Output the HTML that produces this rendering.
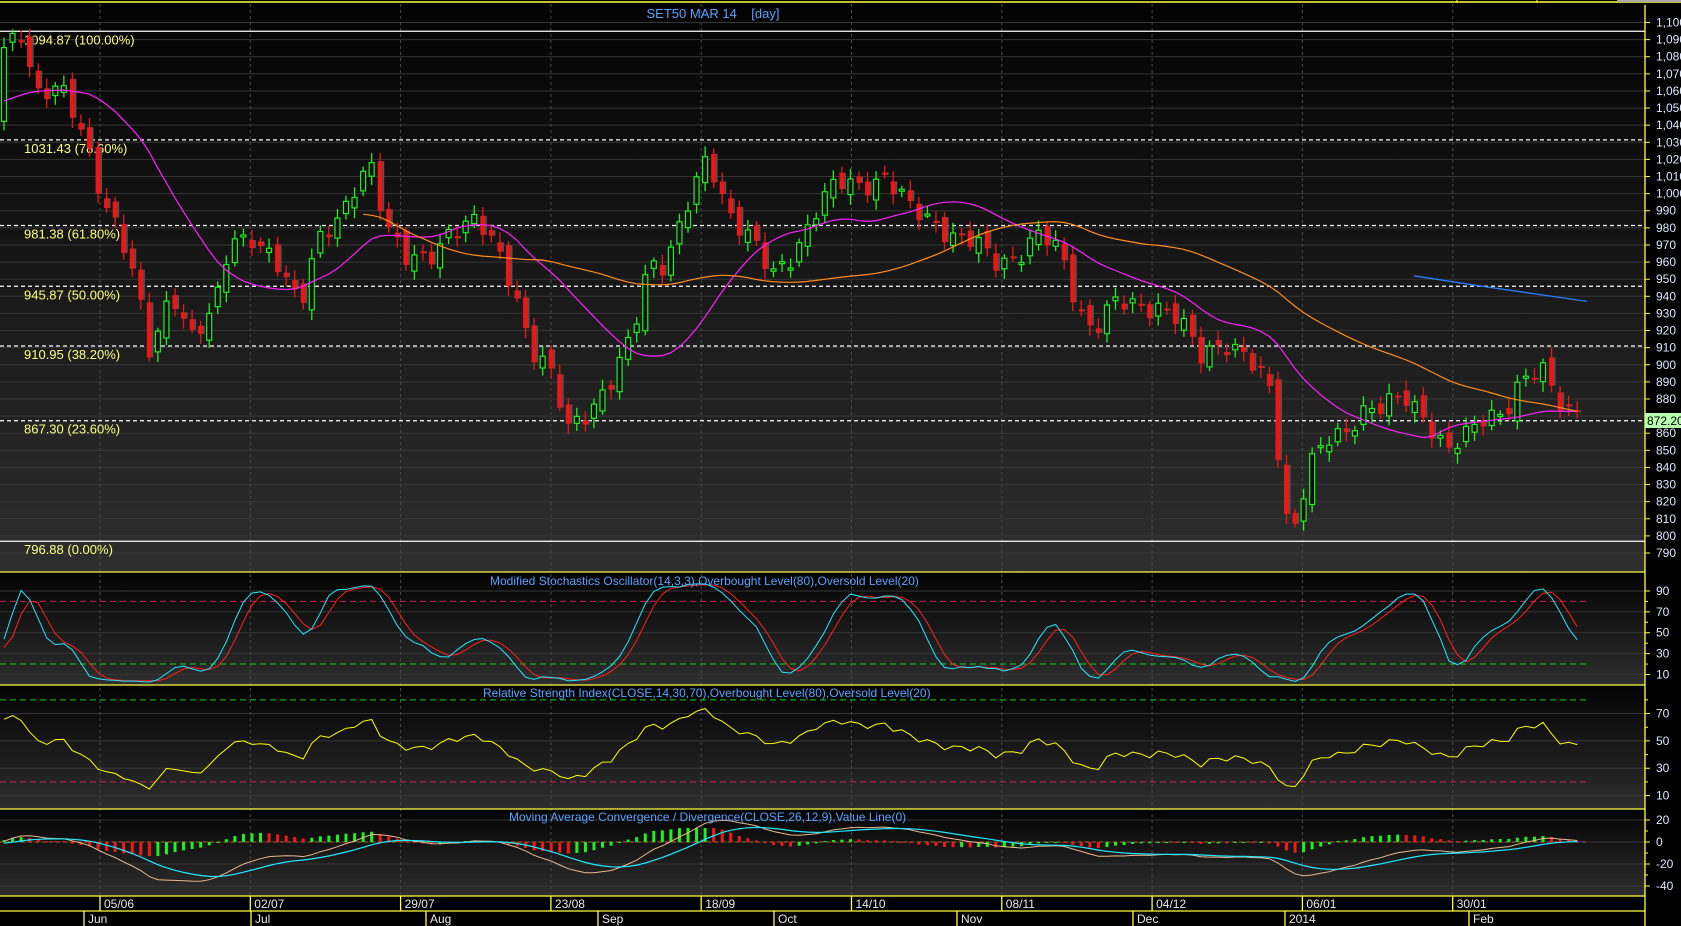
<!DOCTYPE html>
<html><head><meta charset="utf-8">
<style>
html,body{margin:0;padding:0;background:#000;width:1681px;height:926px;overflow:hidden}
svg{display:block}
text{font-family:"Liberation Sans",Arial,sans-serif}
</style></head><body>
<svg id="s" width="1681" height="926" xmlns="http://www.w3.org/2000/svg">
<defs>
<linearGradient id="g" x1="0" y1="0" x2="0" y2="1"><stop offset="0" stop-color="#030303"/><stop offset="1" stop-color="#2e2e2e"/></linearGradient>
</defs>
<rect x="0" y="0" width="1681" height="926" fill="#000"/>
<rect x="0" y="4" width="1645" height="568" fill="url(#g)"/>
<rect x="0" y="572" width="1645" height="113" fill="url(#g)"/>
<rect x="0" y="685" width="1645" height="124" fill="url(#g)"/>
<rect x="0" y="809" width="1645" height="87" fill="url(#g)"/>
<g id="c"></g>
</svg>
<script>
var S='';
function L(x1,y1,x2,y2,c,w,d){S+='<line x1="'+x1+'" y1="'+y1+'" x2="'+x2+'" y2="'+y2+'" stroke="'+c+'" stroke-width="'+(w||1)+'"'+(d?' stroke-dasharray="'+d+'"':'')+'/>';}
function T(x,y,t,c,sz,anc){S+='<text x="'+x+'" y="'+y+'" fill="'+c+'" font-size="'+(sz||12)+'"'+(anc?' text-anchor="'+anc+'"':'')+'>'+t+'</text>';}
function P(pts,c,w){if(!pts.length)return;S+='<polyline fill="none" stroke="'+c+'" stroke-width="'+(w||1)+'" points="'+pts.map(p=>p[0].toFixed(1)+','+p[1].toFixed(1)).join(' ')+'"/>';}
var AX=1645;
function py(v){return 22.5+(1100-v)*1.7113;}
function sy(v){return 674.5-(v-10)*1.044;}
function ry(v){return 795.6-(v-10)*1.368;}
function my(v){return 842-v*1.1;}
for(var v=790;v<=1100;v+=10){L(0,py(v),AX,py(v),'#363636');}
[90,70,50,30,10].forEach(v=>L(0,sy(v),AX,sy(v),'#363636'));
[70,50,30,10].forEach(v=>L(0,ry(v),AX,ry(v),'#363636'));
[20,0,-20,-40].forEach(v=>L(0,my(v),AX,my(v),'#363636'));
var dl=['05/06','02/07','29/07','23/08','18/09','14/10','08/11','04/12','06/01','30/01'];
for(var k=0;k<10;k++){var x=100+150.3*k;L(x,4,x,896,'#4a4a4a',1,'3,3');}
var fib=[[1094.87,'1094.87 (100.00%)',0],[1031.43,'1031.43 (78.60%)',1],[981.38,'981.38 (61.80%)',1],[945.87,'945.87 (50.00%)',1],[910.95,'910.95 (38.20%)',1],[867.30,'867.30 (23.60%)',1],[796.88,'796.88 (0.00%)',0]];
fib.forEach(f=>{var y=py(f[0]);L(0,y,AX,y,'#ffffff',1.2,f[2]?'4,3':null);T(24,y+13,f[1],'#ffff80',13);});
var kp=[[0,1080],[20,1094],[35,1060],[55,1062],[80,1030],[95,1000],[110,980],[125,950],[140,905],[160,945],[180,915],[200,930],[215,975],[235,975],[260,955],[280,935],[295,975],[320,985],[345,1020],[360,985],[380,960],[400,960],[420,980],[440,985],[455,975],[480,945],[495,910],[510,900],[530,862],[550,875],[570,890],[590,915],[605,960],[620,960],[640,990],[660,1020],[680,990],[700,975],[720,950],[740,965],[760,990],[780,1005],[800,1005],[825,1010],[850,990],[870,985],[890,975],[910,970],[930,960],[950,965],[970,975],[990,965],[1005,935],[1020,920],[1040,935],[1060,935],[1080,935],[1100,925],[1120,905],[1140,915],[1160,905],[1185,885],[1200,812],[1210,808],[1220,840],[1240,855],[1255,860],[1270,875],[1290,875],[1310,880],[1330,870],[1350,850],[1365,855],[1385,870],[1405,875],[1420,890],[1440,895],[1460,875],[1478,872]];
kp=kp.map(p=>[p[0]*1.072,p[1]]);
function base(x){for(var j=1;j<kp.length;j++){if(x<=kp[j][0]){var a=kp[j-1],b=kp[j];return a[1]+(b[1]-a[1])*(x-a[0])/(b[0]-a[0]);}}return kp[kp.length-1][1];}
var N=185,X0=4,DX=8.55,PRE=40;
var C=[],O=[],H=[],Lo=[];
for(var i=-PRE;i<N;i++){var c=i<0?1050+Math.sin(i)*8-i*0.3:base(X0+i*DX)+5*Math.sin(i*2.1)+3*Math.sin(i*0.77+2);C.push(c);}
for(var i=0;i<C.length;i++){var o=i?C[i-1]+4*Math.sin(i*3.7):C[i];O.push(o);H.push(Math.max(o,C[i])+2+4*Math.abs(Math.sin(i*1.3)));Lo.push(Math.min(o,C[i])-2-4*Math.abs(Math.cos(i*1.9)));}
C[C.length-1]=872.2;
function X(i){return X0+(i-PRE)*DX;}
for(var i=PRE;i<C.length;i++){var x=X(i),o=O[i],c=C[i],up=c>=o;
 var col=up?'#22ee22':'#e81818';
 L(x,py(H[i]),x,py(Lo[i]),col,1.3);
 var t=py(Math.max(o,c)),b=py(Math.min(o,c));if(b-t<2)b=t+2;
 if(up){S+='<rect x="'+(x-2.5)+'" y="'+t+'" width="5" height="'+(b-t)+'" fill="#111" stroke="'+col+'" stroke-width="1.2"/>';}
 else{S+='<rect x="'+(x-2.5)+'" y="'+t+'" width="5" height="'+(b-t)+'" fill="'+col+'"/><rect x="'+(x+2.5)+'" y="'+t+'" width="1.5" height="'+(b-t)+'" fill="#555"/>';}
}
function sma(n){var r=[];for(var i=0;i<C.length;i++){if(i<n-1){r.push(null);continue;}var s=0;for(var j=i-n+1;j<=i;j++)s+=C[j];r.push(s/n);}return r;}
var m1=sma(18),pts=[];for(var i=PRE;i<C.length;i++)pts.push([X(i),py(m1[i])]);P(pts,'#ff20ff',1.2);
var m2=[];for(var i=0;i<C.length;i++){if(i-PRE<42){m2.push(null);continue;}var t2=0;for(var j=i-44;j<=i;j++)t2+=C[j];m2.push(t2/45);}
pts=[];for(var i=PRE+42;i<C.length;i++)pts.push([X(i),py(m2[i])]);P(pts,'#ff8c1a',1.2);
P([[1414,py(952)],[1480,py(946)],[1540,py(941)],[1587,py(937)]],'#2a7fff',1.3);
var Kr=[];for(var i=0;i<C.length;i++){var hh=-1e9,ll=1e9;for(var j=Math.max(0,i-13);j<=i;j++){hh=Math.max(hh,H[j]);ll=Math.min(ll,Lo[j]);}Kr.push(100*(C[i]-ll)/(hh-ll));}
function sm(a,n){var r=[];for(var i=0;i<a.length;i++){var s=0,c=0;for(var j=Math.max(0,i-n+1);j<=i;j++){s+=a[j];c++;}r.push(s/c);}return r;}
var K=sm(Kr,3);var D=sm(K,3);
L(0,sy(80),1587,sy(80),'#d0205a',1,'6,4');L(0,sy(20),1587,sy(20),'#10d010',1,'6,4');
pts=[];for(var i=PRE;i<C.length;i++)pts.push([X(i),sy(Math.max(4,Math.min(96,D[i])))]);P(pts,'#ff2020',1);
pts=[];for(var i=PRE;i<C.length;i++)pts.push([X(i),sy(Math.max(2,Math.min(98,K[i])))]);P(pts,'#22e8ff',1);
var ag=0,al=0,R=[];for(var i=1;i<C.length;i++){var d=C[i]-C[i-1],g=d>0?d:0,l=d<0?-d:0;if(i<=14){ag+=g/14;al+=l/14;}else{ag=(ag*13+g)/14;al=(al*13+l)/14;}R[i]=100-100/(1+ag/(al||1e-6));}
L(0,ry(80),1587,ry(80),'#10d010',1,'6,4');L(0,ry(20),1587,ry(20),'#d0205a',1,'6,4');
pts=[];for(var i=PRE;i<C.length;i++)pts.push([X(i),ry(R[i])]);P(pts,'#ffff00',1);
function ema(a,n){var k=2/(n+1),r=[a[0]];for(var i=1;i<a.length;i++)r.push(a[i]*k+r[i-1]*(1-k));return r;}
var e12=ema(C,12),e26=ema(C,26),M=C.map((c,i)=>e12[i]-e26[i]),SG=ema(M,9);
L(0,my(0),1587,my(0),'#b06a20',1,'4,3');
for(var i=PRE;i<C.length;i++){var h=(M[i]-SG[i]),hp=(M[i-1]-SG[i-1]);var x=X(i);var hh2=Math.min(14,Math.max(1,Math.abs(h*1.1)));S+='<rect x="'+(x-1.5)+'" y="'+(h>=0?my(0)-hh2:my(0))+'" width="3" height="'+hh2+'" fill="'+(h>=hp?'#22ee22':'#ee1a1a')+'"/>';}
pts=[];for(var i=PRE;i<C.length;i++)pts.push([X(i),my(M[i])]);P(pts,'#e8b890',1);
pts=[];for(var i=PRE;i<C.length;i++)pts.push([X(i),my(SG[i])]);P(pts,'#22e8ff',1.2);
T(713,18,'SET50 MAR 14&#160;&#160;&#160;&#160;[day]','#5aa2ff',13,'middle');
T(490,585,'Modified Stochastics Oscillator(14,3,3),Overbought Level(80),Oversold Level(20)','#5aa2ff',12);
T(483,697,'Relative Strength Index(CLOSE,14,30,70),Overbought Level(80),Oversold Level(20)','#5aa2ff',12);
T(509,821,'Moving Average Convergence / Divergence(CLOSE,26,12,9),Value Line(0)','#5aa2ff',12);
L(0,2,1681,2,'#ffff40',1.5);
L(1457,0,1457,3,'#ffff40',1);L(1537,0,1537,3,'#ffff40',1);
S+='<rect x="1617" y="0" width="64" height="2" fill="#aaa"/>';
[572,685,809,896,911].forEach(y=>L(0,y,AX,y,'#ffff40',1.3));
L(AX,5,AX,926,'#ffff40',1.3);
for(var v=790;v<=1100;v+=10){var y=py(v);L(AX,y,AX+5,y,'#ffff40');var t=v>=1000?'1,'+String(v-1000).padStart(3,'0'):String(v);if(v==870)continue;T(1656,y+4,t,'#dde8ff',12);}
[90,70,50,30,10].forEach(v=>{L(AX,sy(v),AX+5,sy(v),'#ffff40');T(1656,sy(v)+4,v,'#dde8ff',12);});
[80,60,40,20].forEach(v=>L(AX,sy(v),AX+3,sy(v),'#ffff40'));
[70,50,30,10].forEach(v=>{L(AX,ry(v),AX+5,ry(v),'#ffff40');T(1656,ry(v)+4,v,'#dde8ff',12);});
[80,60,40,20].forEach(v=>L(AX,ry(v),AX+3,ry(v),'#ffff40'));
[20,0,-20,-40].forEach(v=>{L(AX,my(v),AX+5,my(v),'#ffff40');T(1656,my(v)+4,v,'#dde8ff',12);});
[10,-10,-30].forEach(v=>L(AX,my(v),AX+3,my(v),'#ffff40'));
S+='<rect x="1645" y="413" width="36" height="15" fill="#b8ffb0"/>';T(1647,425,'872.20','#000',12);
for(var k=0;k<10;k++){var x=100+150.3*k;L(x,896,x,911,'#ffff40',1.3);T(x+4,908,dl[k],'#e8e8e8',12);}
var mo=[['Jun',84],['Jul',251],['Aug',426],['Sep',598],['Oct',774],['Nov',957],['Dec',1133],['2014',1285],['Feb',1469]];
mo.forEach(m=>{L(m[1],911,m[1],926,'#ffff40',1.3);T(m[1]+4,923,m[0],'#e8e8e8',12);});
document.getElementById('c').innerHTML=S;
</script>
</body></html>
